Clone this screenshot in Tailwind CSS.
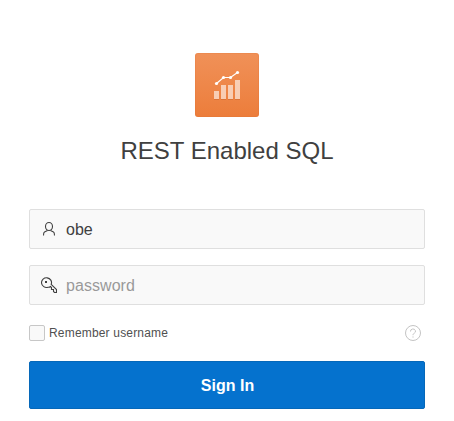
<!DOCTYPE html>
<html lang="en">
<head>
<meta charset="utf-8">
<title>Sign In</title>
<script src="https://cdn.jsdelivr.net/npm/@tailwindcss/browser@4"></script>
</head>
<body class="h-[421px] overflow-hidden bg-white font-['Liberation_Sans',Arial,sans-serif] text-[#404040]">
<main class="flex w-[454px] flex-col items-center pt-[53px] pr-[29px] pl-[29px]">
  <div class="flex size-16 items-center justify-center rounded-[3px] bg-linear-to-b from-[#f09158] to-[#ec7d3a] shadow-[inset_0_0_0_1px_rgba(220,110,50,0.2)]">
    <svg class="size-8" viewBox="0 0 32 32" fill="none">
      <path d="M3 22h5v8H3zM10 16h5v14h-5zM17 16h5v14h-5zM24 11h5v19h-5z" fill="#fff" fill-opacity=".6"/>
      <path d="M3 30.5h5M10 30.5h5M17 30.5h5M24 30.5h5" stroke="#a84c18" stroke-opacity=".25"/>
      <path d="M5.500 14.500 12.500 8.500H19.500L26.500 3.500" stroke="#fff" stroke-width="1.200"/>
      <g fill="#fff"><circle cx="5.500" cy="14.500" r="1.600"/><circle cx="12.500" cy="8.500" r="1.600"/><circle cx="19.500" cy="8.500" r="1.600"/><circle cx="26.500" cy="3.500" r="1.600"/></g>
    </svg>
  </div>
  <h1 class="mt-[18px] text-2xl leading-8 whitespace-nowrap">REST Enabled SQL</h1>
  <form class="mt-[42px] flex w-[396px] flex-col">
    <label class="flex h-10 items-center rounded-[2px] border border-[#dfdfdf] bg-[#f9f9f9] pl-[11px] text-base">
      <svg class="mr-[9px] size-4" viewBox="0 0 16 16" fill="none" stroke="#404040" stroke-width="1.100">
        <ellipse cx="8" cy="5.500" rx="3.500" ry="4"/>
        <path d="M6.500 9.500 3.500 11Q2.500 11.500 2.500 14.500M9.500 9.500l3 1.500q1 .5 1 3.500"/>
      </svg>
      <span class="pt-0.5">obe</span>
    </label>
    <label class="mt-4 flex h-10 items-center rounded-[2px] border border-[#dfdfdf] bg-[#f9f9f9] pl-[11px] text-base text-[#999]">
      <svg class="mr-[9px] size-4" viewBox="0 0 16 16" fill="none" stroke="#404040" stroke-width="1.100">
        <path d="M10.200 7.300A5 4.800 0 1 0 7 10.200Q8.500 10.500 9.500 9.500L10.500 10.500V12.500H12.500V14.500L13.500 15.500H15.500V12.500Z"/>
        <rect x="4" y="4" width="2" height="2" fill="#404040" stroke="none"/>
      </svg>
      <span class="pt-0.5 tracking-[0.06px]">password</span>
    </label>
    <div class="mt-5 flex h-4 items-center text-xs text-[#505050]">
      <span class="mr-1 size-4 rounded-[2px] border border-[#c7c7c7] bg-[#f9f9f9]"></span>
      <span class="tracking-[0.18px]">Remember username</span>
      <svg class="mr-1 ml-auto size-4 overflow-visible" viewBox="0 0 16 16" fill="none" stroke="#c4c4c4">
        <circle cx="8" cy="8" r="7.500"/>
        <path d="M5.500 6.500a2.500 2.300 0 1 1 3.700 1.800C8.500 8.700 8 9 8 10.200M8 11.400v1.200"/>
      </svg>
    </div>
    <button type="button" class="mt-5 h-12 rounded-[2px] border border-[#0668b9] bg-[#0572ce] pt-0.5 pl-px text-base font-bold text-white">Sign In</button>
  </form>
</main>
</body>
</html>
